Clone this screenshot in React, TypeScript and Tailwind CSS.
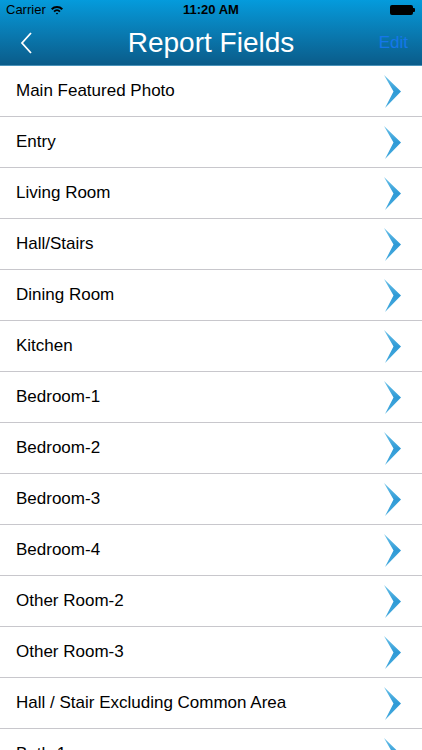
import React from 'react';

const fields = [
  'Main Featured Photo',
  'Entry',
  'Living Room',
  'Hall/Stairs',
  'Dining Room',
  'Kitchen',
  'Bedroom-1',
  'Bedroom-2',
  'Bedroom-3',
  'Bedroom-4',
  'Other Room-2',
  'Other Room-3',
  'Hall / Stair Excluding Common Area',
  'Bath-1',
];

const Chevron: React.FC<{ id: string }> = ({ id }) => (
  <svg width="17" height="33" viewBox="0 0 17 33">
    <defs>
      <linearGradient id={id} x1="0" y1="0" x2="0" y2="1">
        <stop offset="0" stopColor="#6cc3ea" />
        <stop offset="0.5" stopColor="#2f9ad6" />
        <stop offset="1" stopColor="#4aaee0" />
      </linearGradient>
    </defs>
    <polygon points="0,0 17,16.5 1,33 9.5,16.5" fill={`url(#${id})`} />
  </svg>
);

const App: React.FC = () => {
  return (
    <div className="w-[422px] h-[750px] overflow-hidden bg-white" style={{ fontFamily: '"Liberation Sans", Arial, sans-serif' }}>
      {/* Header */}
      <div className="bg-gradient-to-b from-[#049bdc] to-[#0a5c8a] border-b border-[#4a93ba]">
        {/* Status bar */}
        <div className="h-5 flex items-center justify-between px-[6px] text-[13px] text-black">
          <div className="flex items-center gap-1 w-[120px]">
            <span>Carrier</span>
            <svg width="14" height="10" viewBox="0 0 14 10">
              <path d="M1 3.5 A8.5 8.5 0 0 1 13 3.5 L11.6 4.9 A6.5 6.5 0 0 0 2.4 4.9 Z" fill="#000" />
              <path d="M3.4 5.9 A5 5 0 0 1 10.6 5.9 L9.2 7.3 A3 3 0 0 0 4.8 7.3 Z" fill="#000" />
              <path d="M5.8 8.3 A1.7 1.7 0 0 1 8.2 8.3 L7 9.6 Z" fill="#000" />
            </svg>
          </div>
          <span className="font-bold">11:20 AM</span>
          <div className="w-[120px] flex justify-end items-center pr-[1px]">
            <div className="w-[23px] h-[10px] bg-black rounded-[2px]" />
            <div className="w-[2px] h-[4px] bg-black rounded-r-[1px]" />
          </div>
        </div>
        {/* Nav bar */}
        <div className="h-[45px] flex items-center justify-between px-[14px]">
          <div className="w-[60px] flex items-center">
            <svg width="13" height="22" viewBox="0 0 13 22" className="ml-[6px]">
              <path d="M11 1 L2 11 L11 21" stroke="#fff" strokeWidth="1.8" fill="none" />
            </svg>
          </div>
          <span className="text-white text-[28px] leading-none">Report Fields</span>
          <div className="w-[60px] flex justify-end">
            <span className="text-[#1577ea] text-[17px]">Edit</span>
          </div>
        </div>
      </div>

      {/* List */}
      <div>
        {fields.map((f, i) => (
          <div
            key={f}
            className="h-[51px] flex items-center justify-between pl-4 pr-[21px] border-b border-[#c8c7cc]"
          >
            <span className="text-[17px] text-black">{f}</span>
            <Chevron id={`chev-${i}`} />
          </div>
        ))}
      </div>
    </div>
  );
};

export default App;
